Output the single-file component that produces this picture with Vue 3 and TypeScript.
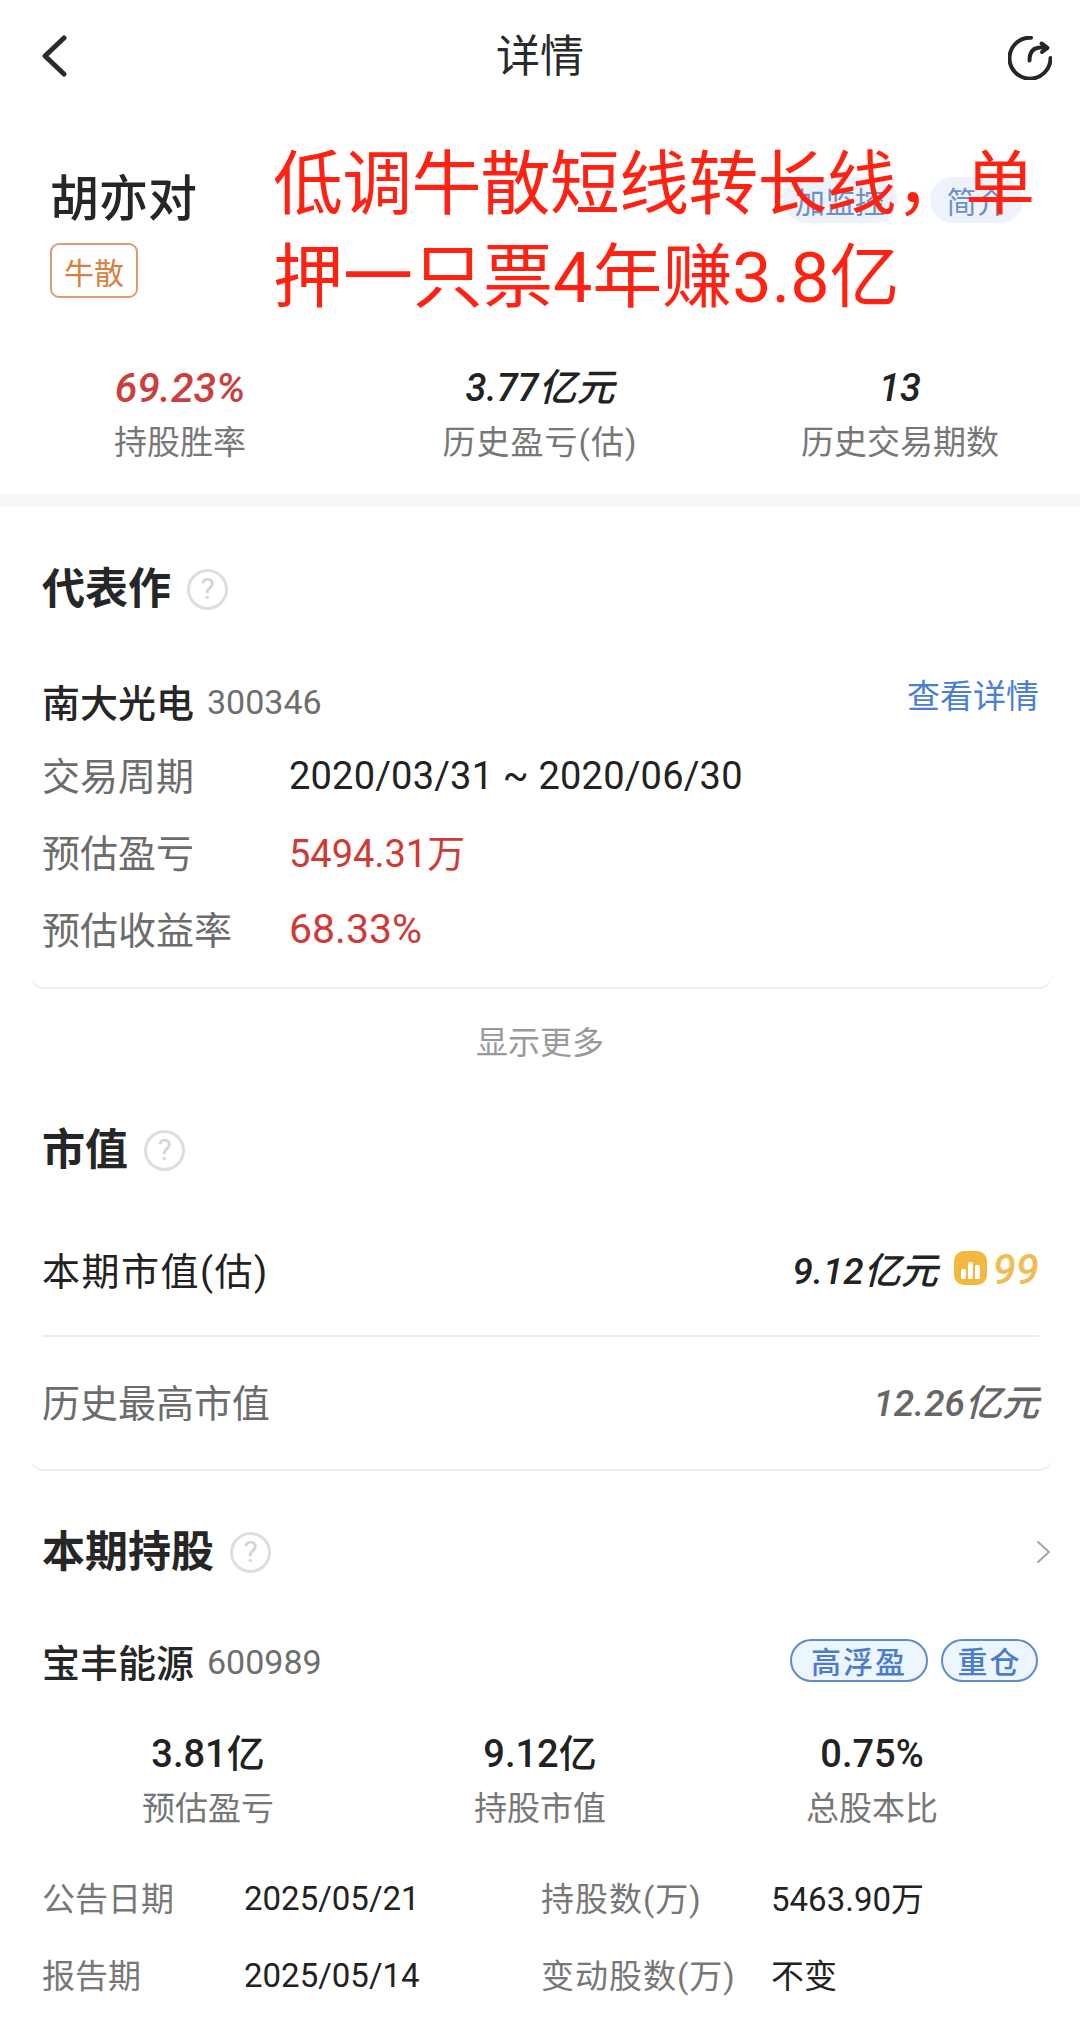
<script setup lang="ts">
interface Stat { value: string; label: string; tone?: string }
const topStats: Stat[] = [
  { value: '69.23%', label: '持股胜率', tone: 'red' },
  { value: '3.77亿元', label: '历史盈亏(估)' },
  { value: '13', label: '历史交易期数' },
]
const holdStats: Stat[] = [
  { value: '3.81亿', label: '预估盈亏' },
  { value: '9.12亿', label: '持股市值' },
  { value: '0.75%', label: '总股本比' },
]
const workRows: Stat[] = [
  { label: '交易周期', value: '2020/03/31 ~ 2020/06/30', tone: 'range' },
  { label: '预估盈亏', value: '5494.31万', tone: 'red' },
  { label: '预估收益率', value: '68.33%', tone: 'red wide' },
]
const detail = [
  ['公告日期', '2025/05/21', '持股数(万)', '5463.90万'],
  ['报告期', '2025/05/14', '变动股数(万)', '不变'],
]
const hasParen = (s: string): boolean => s.includes('(')
</script>

<template>
  <div class="page">
    <header class="nav">
      <svg class="back" width="26" height="42" viewBox="0 0 26 42" fill="none">
        <path d="M23 3 4 21l19 18" stroke="#2b2b2b" stroke-width="5" stroke-linecap="round" stroke-linejoin="round" />
      </svg>
      <h1 class="nav-title">详情</h1>
      <svg class="share" width="44" height="44" viewBox="0 0 44 44" fill="none" stroke="#262626" stroke-width="4" stroke-linecap="round" stroke-linejoin="round">
        <path d="M23 1.700A20.500 20.500 0 1 0 42.500 22" />
        <path d="M21.500 24.500C21.500 15 26 11.500 33 11.500H38" />
        <path d="M33.500 7.500l6 4.300-5.500 4.200" />
      </svg>
    </header>

    <section class="profile">
      <div class="who">
        <div class="who-left">
          <div class="name">胡亦对</div>
          <span class="badge">牛散</span>
        </div>
        <div class="who-actions">
          <span class="soft-btn wide">加监控</span>
          <span class="soft-btn">简介</span>
        </div>
      </div>
      <div class="top-stats">
        <div v-for="s in topStats" :key="s.label" class="top-stat">
          <div class="top-value" :class="s.tone">{{ s.value }}</div>
          <div class="stat-label" :class="{ spaced: hasParen(s.label) }">{{ s.label }}</div>
        </div>
      </div>
      <div class="headline"><span class="hl-first">低调牛散短线转长线，单</span><br />押一只票4年赚3.8亿</div>
    </section>

    <div class="band"></div>

    <section class="work card">
      <div class="sec-title">代表作<span class="help">?</span></div>
      <div class="stock-line">
        <span class="stock-name">南大光电</span><span class="code">300346</span>
        <span class="link">查看详情</span>
      </div>
      <div v-for="r in workRows" :key="r.label" class="work-row">
        <span class="row-label">{{ r.label }}</span>
        <span class="row-value" :class="r.tone">{{ r.value }}</span>
      </div>
    </section>

    <div class="more">显示更多</div>

    <section class="cap card">
      <div class="sec-title">市值<span class="help">?</span></div>
      <div class="cap-row first">
        <span class="cap-label dark spaced-lg">本期市值(估)</span>
        <span class="cap-right">
          <span class="cap-value dark">9.12亿元</span>
          <svg class="rank" width="33" height="34" viewBox="0 0 33 34">
            <rect width="33" height="34" rx="10" fill="#f4b73f" />
            <rect x="7" y="18" width="5" height="10" rx="1.500" fill="#fff" />
            <rect x="14" y="11" width="5" height="17" rx="1.500" fill="#fff" />
            <rect x="21" y="14" width="5" height="14" rx="1.500" fill="#fff" />
          </svg>
          <span class="rank-num">99</span>
        </span>
      </div>
      <div class="cap-row last">
        <span class="cap-label">历史最高市值</span>
        <span class="cap-value grey">12.26亿元</span>
      </div>
    </section>

    <section class="hold">
      <div class="sec-title between">
        <span class="title-wrap">本期持股<span class="help">?</span></span>
        <svg class="chev" width="16" height="24" viewBox="0 0 16 24" fill="none">
          <path d="M2 2l11 10L2 22" stroke="#a6a6a6" stroke-width="2" stroke-linecap="round" stroke-linejoin="round" />
        </svg>
      </div>
      <div class="stock-line hold-line">
        <span class="stock-name">宝丰能源</span><span class="code">600989</span>
        <span class="pills">
          <span class="pill wide">高浮盈</span>
          <span class="pill">重仓</span>
        </span>
      </div>
      <div class="hold-stats">
        <div v-for="s in holdStats" :key="s.label" class="hold-stat">
          <div class="hold-value">{{ s.value }}</div>
          <div class="stat-label">{{ s.label }}</div>
        </div>
      </div>
      <div v-for="d in detail" :key="d[0]" class="detail-row">
        <span class="d-a">{{ d[0] }}</span>
        <span class="d-b">{{ d[1] }}</span>
        <span class="d-c">{{ d[2] }}</span>
        <span class="d-d">{{ d[3] }}</span>
      </div>
      <div class="end-line"></div>
    </section>
  </div>
</template>

<style scoped>
.page {
  position: relative;
  width: 1080px;
  height: 2027px;
  overflow: hidden;
  background: #fff;
  font-family: Roboto, "Noto Sans CJK SC", sans-serif;
  color: #222;
}
.nav {
  height: 110px;
  display: grid;
  grid-template-columns: 1fr auto 1fr;
  align-items: center;
  padding: 0 28px;
}
.back { margin: 2px 0 0 13px; }
.nav-title {
  margin: 3px 0 0;
  font-size: 44px;
  font-weight: 400;
  line-height: 1;
  color: #2a2a2a;
}
.share { margin-top: 5px; justify-self: end; }
.profile { position: relative; height: 384px; }
.who {
  display: flex;
  justify-content: space-between;
  padding: 60px 57px 0 50px;
}
.name {
  font-size: 49px;
  font-weight: 500;
  line-height: 60px;
  color: #262626;
}
.badge {
  display: flex;
  align-items: center;
  justify-content: center;
  box-sizing: border-box;
  width: 88px;
  height: 55px;
  margin-top: 13px;
  border: 2px solid #dc9a77;
  border-radius: 9px;
  font-size: 30px;
  color: #d9803f;
}
.who-actions { display: flex; gap: 33px; padding-top: 7px; }
.soft-btn {
  display: flex;
  align-items: center;
  justify-content: center;
  width: 93px;
  height: 46px;
  border-radius: 23px;
  background: #eef3fb;
  font-size: 30px;
  color: #6d90c6;
}
.soft-btn.wide { width: 114px; }
.top-stats {
  display: grid;
  grid-template-columns: repeat(3, 360px);
  margin-top: 67px;
}
.top-stat { text-align: center; }
.top-value {
  font-size: 38px;
  font-weight: 500;
  font-style: italic;
  line-height: 46px;
  color: #222;
}
.top-value.red { color: #c9403c; font-size: 41px; }
.stat-label {
  margin-top: 11px;
  font-size: 33px;
  line-height: 42px;
  color: #777;
}
.spaced { letter-spacing: 1px; }
.spaced-lg { letter-spacing: 1.500px; }
.headline {
  position: absolute;
  left: 273px;
  top: 29px;
  font-size: 70px;
  line-height: 93px;
  color: #ff2112;
  white-space: nowrap;
}
.hl-first { letter-spacing: -0.800px; }
.band { height: 13px; background: #f7f7f7; }
.card {
  margin: 0 28px 0 30px;
  padding: 0 13px 0 12px;
  border-bottom: 2px solid #ececec;
  border-radius: 0 0 14px 14px;
}
.sec-title {
  display: flex;
  align-items: center;
  font-size: 43px;
  font-weight: 600;
  line-height: 50px;
  color: #262626;
}
.title-wrap { display: flex; align-items: center; }
.between { justify-content: space-between; }
.help {
  display: flex;
  align-items: center;
  justify-content: center;
  box-sizing: border-box;
  width: 41px;
  height: 41px;
  margin-left: 16px;
  border: 3px solid #dedede;
  border-radius: 50%;
  font-size: 30px;
  font-weight: 400;
  color: #d4d4d4;
}
.work { height: 482px; box-sizing: border-box; padding-top: 57px; }
.stock-line {
  display: flex;
  align-items: center;
  margin-top: 61px;
  height: 50px;
}
.stock-name {
  font-size: 38px;
  font-weight: 500;
  color: #262626;
}
.code {
  margin: 3px 0 0 13px;
  font-size: 34px;
  color: #6e6e6e;
}
.link {
  margin-left: auto;
  margin-top: -13px;
  font-size: 33px;
  color: #4a80d4;
}
.work-row {
  display: flex;
  align-items: center;
  height: 77px;
}
.stock-line + .work-row { margin-top: 10px; }
.row-label { width: 247px; font-size: 38px; color: #6c6c6c; }
.row-value { font-size: 38px; color: #222; }
.row-value.range { margin-top: 4px; letter-spacing: 0.200px; }
.row-value.red { color: #cf3a35; }
.row-value.wide { margin-top: 3px; font-size: 41px; }
.more {
  height: 122px;
  padding-top: 33px;
  box-sizing: border-box;
  text-align: center;
  font-size: 32px;
  line-height: 42px;
  color: #999;
}
.cap { height: 360px; box-sizing: border-box; padding-top: 14px; }
.cap-row {
  display: flex;
  align-items: center;
  justify-content: space-between;
  box-sizing: border-box;
  height: 134px;
}
.cap-row.first {
  height: 136px;
  margin-top: 26px;
  border-bottom: 2px solid #ececec;
}
.cap-row.last { padding-bottom: 8px; }
.cap-label { font-size: 38px; color: #6c6c6c; }
.cap-right { display: flex; align-items: center; }
.cap-value { font-size: 37px; font-weight: 500; font-style: italic; }
.dark { color: #222; }
.grey { color: #666; }
.rank { margin-left: 16px; }
.rank-num {
  margin: 3px 0 0 6px;
  font-size: 42px;
  font-weight: 500;
  font-style: italic;
  color: #f0bc55;
}
.hold { padding: 56px 42px 0 42px; }
.chev { margin-right: -14px; }
.hold-line { margin-top: 58px; }
.pills {
  display: flex;
  gap: 13px;
  margin-left: auto;
}
.pill {
  display: flex;
  align-items: center;
  justify-content: center;
  box-sizing: border-box;
  width: 97px;
  height: 43px;
  border: 2px solid #5f8ccb;
  border-radius: 22px;
  background: #edf5fd;
  font-size: 30px;
  font-weight: 500;
  letter-spacing: 2px;
  color: #4a7ccb;
}
.pill.wide { width: 138px; }
.hold-stats {
  display: grid;
  grid-template-columns: repeat(3, 332px);
  margin: 46px 0 0;
}
.hold-stat { text-align: center; }
.hold-value {
  font-size: 38px;
  font-weight: 500;
  line-height: 46px;
  color: #222;
}
.detail-row {
  display: flex;
  align-items: center;
  height: 77px;
  font-size: 33px;
  color: #222;
}
.hold-stats + .detail-row { margin-top: 28px; }
.d-a { width: 202px; color: #777; }
.d-b { width: 297px; margin-top: 3px; }
.d-c { width: 230px; color: #777; letter-spacing: 1px; }
.d-d { flex: 1; }
.end-line {
  height: 2px;
  margin: 15px 0 0 -2px;
  background: #ececec;
}
</style>

<style>
html, body { margin: 0; background: #fff; }
</style>
